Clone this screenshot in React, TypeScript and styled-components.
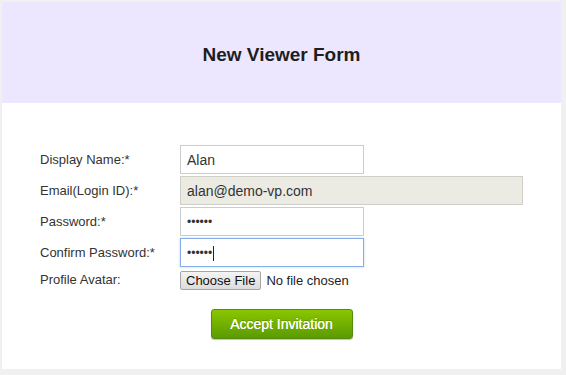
import React from "react";
import styled, { createGlobalStyle } from "styled-components";

const GlobalStyle = createGlobalStyle`
  body {
    margin: 0;
    background: #f0f0f0;
    font-family: "Liberation Sans", Arial, sans-serif;
  }
`;

const Card = styled.div`
  margin: 2px 5px 6px 2px;
  background: #ffffff;
`;

const Header = styled.div`
  height: 101px;
  box-sizing: border-box;
  padding-top: 4px;
  background: #ece6fe;
  display: flex;
  align-items: center;
  justify-content: center;
`;

const Title = styled.h1`
  margin: 0;
  font-size: 19px;
  font-weight: bold;
  color: #1e1e1e;
`;

const Body = styled.form`
  padding: 42px 38px 30px 38px;
  display: flex;
  flex-direction: column;
`;

const Fields = styled.div`
  display: grid;
  grid-template-columns: 140px 1fr;
  row-gap: 2px;
  align-items: center;
`;

const Label = styled.label`
  font-size: 13px;
  color: #333;
`;

const InputWrap = styled.div`
  position: relative;
  width: fit-content;
`;

const TextInput = styled.input<{ $wide?: boolean }>`
  box-sizing: border-box;
  display: block;
  width: ${(p) => (p.$wide ? "343px" : "184px")};
  height: 29px;
  margin: 0;
  padding: 0 6px;
  font-family: "Liberation Sans", Arial, sans-serif;
  font-size: ${(p) => (p.type === "password" ? "12px" : "14px")};
  color: #333;
  background: ${(p) => (p.readOnly ? "#ebebe4" : "#ffffff")};
  border: 1px solid ${(p) => (p.readOnly ? "#cfcfc8" : "#cccccc")};
  border-radius: 0;
  outline: none;
  caret-color: transparent;
  &:focus {
    border-color: #86aee8;
    box-shadow: 0 0 2px rgba(120, 160, 230, 0.5);
  }
`;

const Caret = styled.span`
  position: absolute;
  left: 33px;
  top: 8px;
  width: 1px;
  height: 15px;
  background: #222;
`;

const FileRow = styled.div`
  display: flex;
  align-items: center;
  gap: 5px;
  height: 20px;
  margin-top: 1px;
`;

const FileButton = styled.button`
  height: 19px;
  padding: 0 5px;
  font-family: "Liberation Sans", Arial, sans-serif;
  font-size: 13px;
  color: #111;
  background: linear-gradient(#f4f4f4, #dcdcdc);
  border: 1px solid #a6a6a6;
  border-radius: 2px;
  line-height: 15px;
`;

const FileText = styled.span`
  font-size: 13px;
  color: #222;
`;

const Actions = styled.div`
  display: flex;
  justify-content: center;
  margin-top: 19px;
`;

const AcceptButton = styled.button`
  width: 142px;
  height: 30px;
  font-family: "Liberation Sans", Arial, sans-serif;
  font-size: 14px;
  color: #ffffff;
  background: linear-gradient(#8ac600, #5b9b00);
  border: 1px solid #528c10;
  border-radius: 3px;
  box-shadow: 0 1px 1px rgba(0, 0, 0, 0.25);
  text-shadow: 0 0 0.6px #fff, 0 -1px 0 rgba(0, 0, 0, 0.2);
`;

export default function App() {
  return (
    <>
      <GlobalStyle />
      <Card>
        <Header>
          <Title>New Viewer Form</Title>
        </Header>
        <Body onSubmit={(e) => e.preventDefault()}>
          <Fields>
            <Label>Display Name:*</Label>
            <TextInput type="text" defaultValue="Alan" />
            <Label>Email(Login ID):*</Label>
            <TextInput type="text" readOnly $wide defaultValue="alan@demo-vp.com" />
            <Label>Password:*</Label>
            <TextInput type="password" defaultValue="secret" />
            <Label>Confirm Password:*</Label>
            <InputWrap>
              <TextInput type="password" defaultValue="secret" autoFocus />
              <Caret />
            </InputWrap>
            <Label>Profile Avatar:</Label>
            <FileRow>
              <FileButton type="button">Choose File</FileButton>
              <FileText>No file chosen</FileText>
            </FileRow>
          </Fields>
          <Actions>
            <AcceptButton type="submit">Accept Invitation</AcceptButton>
          </Actions>
        </Body>
      </Card>
    </>
  );
}
